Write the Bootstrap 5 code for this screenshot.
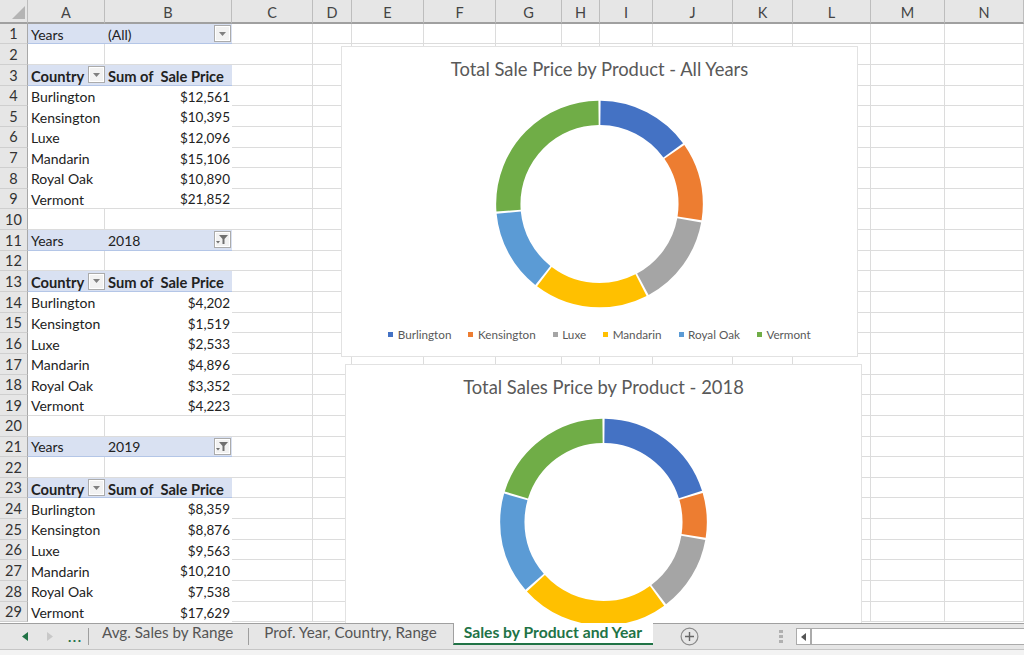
<!DOCTYPE html>
<html lang="en">
<head>
<meta charset="utf-8">
<title>Sales by Product and Year</title>
<link rel="stylesheet" href="https://cdn.jsdelivr.net/npm/bootstrap@5.3.0/dist/css/bootstrap.min.css">
<style>
html,body{height:655px;overflow:hidden;background:#f3f3f3}
body{font-family:"Lato","Liberation Sans",sans-serif;color:#222}
.sheet-pane{height:623px;overflow:hidden;background:#fff}
.sheet-grid{display:grid;grid-template-columns:28px 77px 127px 81px 39px 72px 72px 66px 38px 53px 80px 60px 78px 74px 79px;grid-template-rows:23.7px;grid-auto-rows:20.65px;font-size:14px;line-height:1}
.sheet-grid>*{display:flex;align-items:center;min-width:0;white-space:pre;font-style:normal;font-weight:400}
.sheet-grid>i{border-right:1px solid #dcdcdc;border-bottom:1px solid #dcdcdc}
.corner,.colhead{background:#e6e6e6;border-bottom:2px solid #a0a0a0;border-right:1px solid #bdbdbd;justify-content:center;color:#444;font-size:14.5px;padding-top:4px}
.corner{padding:0;justify-content:flex-start}
.rowhead{background:#e6e6e6;border-right:1px solid #a8a8a8;border-bottom:1px solid #cfcfcf;justify-content:center;color:#333;font-size:14.5px;padding-top:2px}
.pt{padding:2px 3px 0;color:#222}
.sheet-grid>.pt-num{justify-content:flex-end;font-size:13.5px;padding-right:2px;padding-top:3px}
.pt-end{border-bottom:1px solid #dcdcdc}
.pt-blank{border-bottom:1px solid #dcdcdc}
.pt-sep{border-right:1px solid #dcdcdc}
.pt-band{background:#d9e1f2;border-bottom:1px solid #b4c6e7!important}
.sheet-grid>.pt-bold{font-weight:700;font-size:14.7px;padding-top:3px}
.pt-split{justify-content:space-between}
.flt{width:17px;height:17px;background:#f2f2f2;border:1px solid #ababab;display:flex;align-items:center;justify-content:center;flex:none;box-shadow:inset 0 0 0 1px #fff;margin-top:-2px}
.pt-bold .flt{margin-top:-3px}
.pt-a-flt{padding-right:0}
.pt-b-flt{padding-right:1px}
.chart-box{position:absolute;width:517px;border:1px solid #e2e2e2;border-radius:0;background:#fff}
.chart-a{left:341px;top:46px;height:311px}
.chart-b{left:345px;top:364px;height:311px}
.chart-title{font-size:18.4px;line-height:22px;color:#595959;text-align:center;margin-top:11px}
.chart-ring{display:block;margin:20px auto 0}
.chart-legend{font-size:11.7px;line-height:14px;color:#595959;margin-top:17px;gap:17px}
.chart-legend .lg{display:flex;align-items:center;gap:4.5px}
.chart-legend .sw{width:5px;height:5px;flex:none}
.lg-burlington{background:#4472c4}
.lg-kensington{background:#ed7d31}
.lg-luxe{background:#a5a5a5}
.lg-mandarin{background:#ffc000}
.lg-royal{background:#5b9bd5}
.lg-vermont{background:#70ad47}
.tab-strip{height:25px;background:#e6e6e6;border-top:1px solid #a0a0a0;border-bottom:1px solid #c6c6c6;font-size:15.2px;color:#555;box-sizing:content-box}
.tab-nav{width:88px;height:24px;flex:none;padding-left:22px;gap:19px}
.tab-dots{color:#217346;font-weight:700;font-size:14px;line-height:1;letter-spacing:1.5px;margin-left:-4px}
.tab-rule{width:1px;height:17px;background:#9e9e9e;flex:none}
.tab-item{line-height:16px;white-space:nowrap;flex:none;align-self:flex-start}
.tab-avg{padding:0 15px 0 13px}
.tab-prof{padding:0 16px 0 15px}
.tab-on{height:20px;background:#fff;color:#217346;font-weight:700;font-size:15.7px;border-bottom:2px solid #217346;border-left:1px solid #a0a0a0;line-height:18px;padding:0 11px 0 10px;margin-top:-1px;align-self:flex-start;box-sizing:content-box;white-space:nowrap;flex:none}
.tab-add{margin-left:27px;flex:none}
.tab-grip{margin-left:80px;flex:none}
.hscroll{margin-left:13px;height:17px;flex:1 1 auto;background:#fff;border:1px solid #ababab;border-right:0;display:flex}
.hscroll-btn{width:15px;border-right:2px solid #ababab;display:flex;align-items:center;justify-content:center;flex:none}
</style>
</head>
<body>
<div class="position-relative sheet-pane">
<div class="sheet-grid">
<div class="corner"><svg width="27" height="22" viewBox="0 0 27 22"><polygon points="25,6 25,19 12,19" fill="#b4b4b4"/></svg></div><div class="colhead">A</div><div class="colhead">B</div><div class="colhead">C</div><div class="colhead">D</div><div class="colhead">E</div><div class="colhead">F</div><div class="colhead">G</div><div class="colhead">H</div><div class="colhead">I</div><div class="colhead">J</div><div class="colhead">K</div><div class="colhead">L</div><div class="colhead">M</div><div class="colhead">N</div>

<div class="rowhead">1</div><div class="pt pt-band">Years</div><div class="pt pt-band pt-split pt-b-flt">(All)<span class="flt"><svg width="7" height="4" viewBox="0 0 7 4"><polygon points="0,0 7,0 3.5,4" fill="#808080"/></svg></span></div><i></i><i></i><i></i><i></i><i></i><i></i><i></i><i></i><i></i><i></i><i></i><i></i>
<div class="rowhead">2</div><div class="pt pt-blank pt-sep"></div><div class="pt pt-blank"></div><i></i><i></i><i></i><i></i><i></i><i></i><i></i><i></i><i></i><i></i><i></i><i></i>
<div class="rowhead">3</div><div class="pt pt-band pt-bold pt-split pt-a-flt">Country<span class="flt"><svg width="7" height="4" viewBox="0 0 7 4"><polygon points="0,0 7,0 3.5,4" fill="#808080"/></svg></span></div><div class="pt pt-band pt-bold">Sum of  Sale Price</div><i></i><i></i><i></i><i></i><i></i><i></i><i></i><i></i><i></i><i></i><i></i><i></i>
<div class="rowhead">4</div><div class="pt">Burlington</div><div class="pt pt-num">$12,561</div><i></i><i></i><i></i><i></i><i></i><i></i><i></i><i></i><i></i><i></i><i></i><i></i>
<div class="rowhead">5</div><div class="pt">Kensington</div><div class="pt pt-num">$10,395</div><i></i><i></i><i></i><i></i><i></i><i></i><i></i><i></i><i></i><i></i><i></i><i></i>
<div class="rowhead">6</div><div class="pt">Luxe</div><div class="pt pt-num">$12,096</div><i></i><i></i><i></i><i></i><i></i><i></i><i></i><i></i><i></i><i></i><i></i><i></i>
<div class="rowhead">7</div><div class="pt">Mandarin</div><div class="pt pt-num">$15,106</div><i></i><i></i><i></i><i></i><i></i><i></i><i></i><i></i><i></i><i></i><i></i><i></i>
<div class="rowhead">8</div><div class="pt">Royal Oak</div><div class="pt pt-num">$10,890</div><i></i><i></i><i></i><i></i><i></i><i></i><i></i><i></i><i></i><i></i><i></i><i></i>
<div class="rowhead">9</div><div class="pt pt-end">Vermont</div><div class="pt pt-num pt-end">$21,852</div><i></i><i></i><i></i><i></i><i></i><i></i><i></i><i></i><i></i><i></i><i></i><i></i>
<div class="rowhead">10</div><div class="pt pt-blank pt-sep"></div><div class="pt pt-blank"></div><i></i><i></i><i></i><i></i><i></i><i></i><i></i><i></i><i></i><i></i><i></i><i></i>

<div class="rowhead">11</div><div class="pt pt-band">Years</div><div class="pt pt-band pt-split pt-b-flt">2018<span class="flt"><svg width="13" height="11" viewBox="0 0 13 11"><polygon points="3,1 12,1 8.5,5 8.5,10 6.5,10 6.5,5" fill="#707070"/><polygon points="0,7 4,7 2,9.5" fill="#707070"/></svg></span></div><i></i><i></i><i></i><i></i><i></i><i></i><i></i><i></i><i></i><i></i><i></i><i></i>
<div class="rowhead">12</div><div class="pt pt-blank pt-sep"></div><div class="pt pt-blank"></div><i></i><i></i><i></i><i></i><i></i><i></i><i></i><i></i><i></i><i></i><i></i><i></i>
<div class="rowhead">13</div><div class="pt pt-band pt-bold pt-split pt-a-flt">Country<span class="flt"><svg width="7" height="4" viewBox="0 0 7 4"><polygon points="0,0 7,0 3.5,4" fill="#808080"/></svg></span></div><div class="pt pt-band pt-bold">Sum of  Sale Price</div><i></i><i></i><i></i><i></i><i></i><i></i><i></i><i></i><i></i><i></i><i></i><i></i>
<div class="rowhead">14</div><div class="pt">Burlington</div><div class="pt pt-num">$4,202</div><i></i><i></i><i></i><i></i><i></i><i></i><i></i><i></i><i></i><i></i><i></i><i></i>
<div class="rowhead">15</div><div class="pt">Kensington</div><div class="pt pt-num">$1,519</div><i></i><i></i><i></i><i></i><i></i><i></i><i></i><i></i><i></i><i></i><i></i><i></i>
<div class="rowhead">16</div><div class="pt">Luxe</div><div class="pt pt-num">$2,533</div><i></i><i></i><i></i><i></i><i></i><i></i><i></i><i></i><i></i><i></i><i></i><i></i>
<div class="rowhead">17</div><div class="pt">Mandarin</div><div class="pt pt-num">$4,896</div><i></i><i></i><i></i><i></i><i></i><i></i><i></i><i></i><i></i><i></i><i></i><i></i>
<div class="rowhead">18</div><div class="pt">Royal Oak</div><div class="pt pt-num">$3,352</div><i></i><i></i><i></i><i></i><i></i><i></i><i></i><i></i><i></i><i></i><i></i><i></i>
<div class="rowhead">19</div><div class="pt pt-end">Vermont</div><div class="pt pt-num pt-end">$4,223</div><i></i><i></i><i></i><i></i><i></i><i></i><i></i><i></i><i></i><i></i><i></i><i></i>
<div class="rowhead">20</div><div class="pt pt-blank pt-sep"></div><div class="pt pt-blank"></div><i></i><i></i><i></i><i></i><i></i><i></i><i></i><i></i><i></i><i></i><i></i><i></i>

<div class="rowhead">21</div><div class="pt pt-band">Years</div><div class="pt pt-band pt-split pt-b-flt">2019<span class="flt"><svg width="13" height="11" viewBox="0 0 13 11"><polygon points="3,1 12,1 8.5,5 8.5,10 6.5,10 6.5,5" fill="#707070"/><polygon points="0,7 4,7 2,9.5" fill="#707070"/></svg></span></div><i></i><i></i><i></i><i></i><i></i><i></i><i></i><i></i><i></i><i></i><i></i><i></i>
<div class="rowhead">22</div><div class="pt pt-blank pt-sep"></div><div class="pt pt-blank"></div><i></i><i></i><i></i><i></i><i></i><i></i><i></i><i></i><i></i><i></i><i></i><i></i>
<div class="rowhead">23</div><div class="pt pt-band pt-bold pt-split pt-a-flt">Country<span class="flt"><svg width="7" height="4" viewBox="0 0 7 4"><polygon points="0,0 7,0 3.5,4" fill="#808080"/></svg></span></div><div class="pt pt-band pt-bold">Sum of  Sale Price</div><i></i><i></i><i></i><i></i><i></i><i></i><i></i><i></i><i></i><i></i><i></i><i></i>
<div class="rowhead">24</div><div class="pt">Burlington</div><div class="pt pt-num">$8,359</div><i></i><i></i><i></i><i></i><i></i><i></i><i></i><i></i><i></i><i></i><i></i><i></i>
<div class="rowhead">25</div><div class="pt">Kensington</div><div class="pt pt-num">$8,876</div><i></i><i></i><i></i><i></i><i></i><i></i><i></i><i></i><i></i><i></i><i></i><i></i>
<div class="rowhead">26</div><div class="pt">Luxe</div><div class="pt pt-num">$9,563</div><i></i><i></i><i></i><i></i><i></i><i></i><i></i><i></i><i></i><i></i><i></i><i></i>
<div class="rowhead">27</div><div class="pt">Mandarin</div><div class="pt pt-num">$10,210</div><i></i><i></i><i></i><i></i><i></i><i></i><i></i><i></i><i></i><i></i><i></i><i></i>
<div class="rowhead">28</div><div class="pt">Royal Oak</div><div class="pt pt-num">$7,538</div><i></i><i></i><i></i><i></i><i></i><i></i><i></i><i></i><i></i><i></i><i></i><i></i>
<div class="rowhead">29</div><div class="pt">Vermont</div><div class="pt pt-num">$17,629</div><i></i><i></i><i></i><i></i><i></i><i></i><i></i><i></i><i></i><i></i><i></i><i></i>
</div>

<div class="card chart-box chart-a">
  <div class="chart-title">Total Sale Price by Product - All Years</div>
  <svg class="chart-ring" width="210" height="210" viewBox="0.5 1 210 210">
    <g fill="none" stroke-width="24.3" transform="rotate(-90 105 105)">
      <circle cx="105" cy="105" r="91.2" pathLength="82900" stroke="#4472c4" stroke-dasharray="12271 82900" stroke-dashoffset="-145"/>
      <circle cx="105" cy="105" r="91.2" pathLength="82900" stroke="#ed7d31" stroke-dasharray="10105 82900" stroke-dashoffset="-12706"/>
      <circle cx="105" cy="105" r="91.2" pathLength="82900" stroke="#a5a5a5" stroke-dasharray="11806 82900" stroke-dashoffset="-23101"/>
      <circle cx="105" cy="105" r="91.2" pathLength="82900" stroke="#ffc000" stroke-dasharray="14816 82900" stroke-dashoffset="-35197"/>
      <circle cx="105" cy="105" r="91.2" pathLength="82900" stroke="#5b9bd5" stroke-dasharray="10600 82900" stroke-dashoffset="-50303"/>
      <circle cx="105" cy="105" r="91.2" pathLength="82900" stroke="#70ad47" stroke-dasharray="21562 82900" stroke-dashoffset="-61193"/>
    </g>
  </svg>
  <div class="d-flex justify-content-center chart-legend">
    <span class="lg"><span class="sw lg-burlington"></span>Burlington</span>
    <span class="lg"><span class="sw lg-kensington"></span>Kensington</span>
    <span class="lg"><span class="sw lg-luxe"></span>Luxe</span>
    <span class="lg"><span class="sw lg-mandarin"></span>Mandarin</span>
    <span class="lg"><span class="sw lg-royal"></span>Royal Oak</span>
    <span class="lg"><span class="sw lg-vermont"></span>Vermont</span>
  </div>
</div>

<div class="card chart-box chart-b">
  <div class="chart-title">Total Sales Price by Product - 2018</div>
  <svg class="chart-ring" width="210" height="210" viewBox="0.5 1 210 210">
    <g fill="none" stroke-width="24.3" transform="rotate(-90 105 105)">
      <circle cx="105" cy="105" r="91.2" pathLength="20725" stroke="#4472c4" stroke-dasharray="4130 20725" stroke-dashoffset="-36"/>
      <circle cx="105" cy="105" r="91.2" pathLength="20725" stroke="#ed7d31" stroke-dasharray="1447 20725" stroke-dashoffset="-4238"/>
      <circle cx="105" cy="105" r="91.2" pathLength="20725" stroke="#a5a5a5" stroke-dasharray="2461 20725" stroke-dashoffset="-5757"/>
      <circle cx="105" cy="105" r="91.2" pathLength="20725" stroke="#ffc000" stroke-dasharray="4824 20725" stroke-dashoffset="-8290"/>
      <circle cx="105" cy="105" r="91.2" pathLength="20725" stroke="#5b9bd5" stroke-dasharray="3280 20725" stroke-dashoffset="-13186"/>
      <circle cx="105" cy="105" r="91.2" pathLength="20725" stroke="#70ad47" stroke-dasharray="4151 20725" stroke-dashoffset="-16538"/>
    </g>
  </svg>
</div>
</div>

<div class="d-flex align-items-center tab-strip">
  <div class="d-flex align-items-center tab-nav">
    <svg width="6" height="9" viewBox="0 0 6 9"><polygon points="6,0 6,9 0,4.5" fill="#217346"/></svg>
    <svg width="6" height="9" viewBox="0 0 6 9"><polygon points="0,0 0,9 6,4.5" fill="#c8c8c8"/></svg>
    <span class="tab-dots">...</span>
  </div>
  <span class="tab-rule"></span>
  <span class="tab-item tab-avg">Avg. Sales by Range</span>
  <span class="tab-rule"></span>
  <span class="tab-item tab-prof">Prof. Year, Country, Range</span>
  <span class="tab-on">Sales by Product and Year</span>
  <svg class="tab-add" width="19" height="19" viewBox="0 0 19 19"><circle cx="9.5" cy="9.5" r="8.4" fill="none" stroke="#8a8a8a" stroke-width="1.2"/><path d="M9.5 5v9M5 9.5h9" stroke="#666" stroke-width="1.4"/></svg>
  <svg class="tab-grip" width="4" height="13" viewBox="0 0 4 13"><path d="M0 0h4v3H0zM0 5h4v3H0zM0 10h4v3H0z" fill="#b0b0b0"/></svg>
  <div class="hscroll"><span class="hscroll-btn"><svg width="5" height="8" viewBox="0 0 5 8"><polygon points="5,0 5,8 0,4" fill="#555"/></svg></span></div>
</div>
</body>
</html>
